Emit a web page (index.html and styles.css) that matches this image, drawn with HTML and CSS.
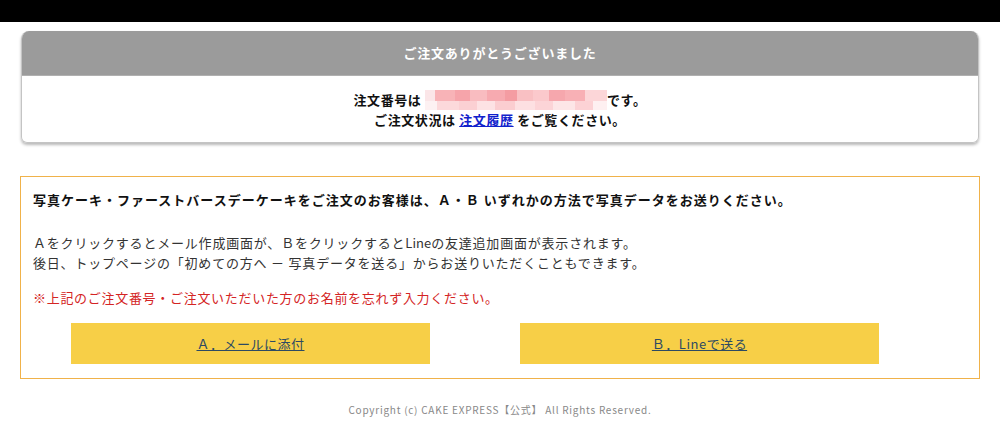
FILE: index.html
```html
<!DOCTYPE html>
<html lang="ja">

<head>
    <meta charset="UTF-8">
    <meta name="viewport" content="width=device-width, initial-scale=1.0">
    <title>ご注文完了 | CAKE EXPRESS</title>
    <link rel="stylesheet" href="styles.css">
</head>

<body>
    <div class="topbar"></div>

    <div class="thanks">
        <div class="thanks-head">ご注文ありがとうございました</div>
        <div class="thanks-body">
            <p>注文番号は <span class="order-no"></span>です。</p>
            <p>ご注文状況は <a href="#">注文履歴</a> をご覧ください。</p>
        </div>
    </div>

    <div class="guide">
        <p class="guide-lead">写真ケーキ・ファーストバースデーケーキをご注文のお客様は、Ａ・Ｂ いずれかの方法で写真データをお送りください。</p>
        <p class="guide-text">Ａをクリックするとメール作成画面が、Ｂをクリックすると<span class="latin">Line</span>の友達追加画面が表示されます。<br>後日、トップページの「初めての方へ － 写真データを送る」からお送りいただくこともできます。</p>
        <p class="guide-note">※上記のご注文番号・ご注文いただいた方のお名前を忘れず入力ください。</p>
        <div class="guide-btns">
            <a class="btn" href="#">Ａ．メールに添付</a>
            <a class="btn" href="#">Ｂ．Lineで送る</a>
        </div>
    </div>

    <footer class="copyright">Copyright (c) CAKE EXPRESS【公式】 All Rights Reserved.</footer>
</body>

</html>
```

FILE: styles.css
```css
body {
    margin: 0;
    background-color: #fff;
    color: #222;
    font-family: "Noto Sans CJK JP", "Noto Sans", sans-serif;
    font-size: 13px;
}

p {
    margin: 0;
}

.topbar {
    height: 22px;
    background-color: #000;
}

/* thank-you card */
.thanks {
    margin: 9px 21px 0;
    border: 1px solid #c4c4c4;
    border-top: none;
    border-radius: 8px 8px 6px 6px;
    box-shadow: 0 2px 3px rgba(0, 0, 0, 0.28);
    overflow: hidden;
}

.thanks-head {
    height: 44px;
    line-height: 44px;
    background-color: #9b9b9b;
    border-bottom: 1px solid #b0b0b0;
    color: #fff;
    font-weight: bold;
    font-size: 13px;
    letter-spacing: 0.8px;
    text-align: center;
}

.thanks-body {
    padding: 14px 0 12px;
    text-align: center;
    font-weight: bold;
    line-height: 20px;
    letter-spacing: 0.6px;
    color: #111;
}

.thanks-body a {
    color: #1122cc;
}

/* order number is blurred out */
.order-no {
    display: inline-block;
    width: 182px;
    height: 20px;
    vertical-align: -5px;
    background-image:
        linear-gradient(to right, #fbe6e8 0 10px, #f8b3b7 10px 30px, #f6a4aa 30px 45px, #f9bcc0 45px 62px, #f7aab0 62px 80px, #f49ca2 80px 92px, #f9c0c3 92px 108px, #fbc9cc 108px 124px, #f6a7ad 124px 140px, #f8b0b5 140px 160px, #fcd6d8 160px 182px),
        linear-gradient(to right, #fdf1f2 0 12px, #fcd9db 12px 34px, #fbd0d3 34px 52px, #fde2e4 52px 70px, #fbcdd0 70px 90px, #fde0e2 90px 110px, #fcd4d7 110px 128px, #fde6e7 128px 150px, #fcd2d5 150px 168px, #fef0f1 168px 182px);
    background-size: 182px 11px, 182px 9px;
    background-position: 0 0, 0 11px;
    background-repeat: no-repeat;
}

/* photo data guide */
.guide {
    margin: 33px 20px 0;
    padding: 13px 12px 14px;
    border: 1px solid #f0b24a;
    line-height: 20px;
    letter-spacing: 0.8px;
    color: #333;
}

.guide-lead {
    font-weight: bold;
    letter-spacing: 1px;
    color: #111;
}

.guide-text {
    margin-top: 23px;
}

.guide-text .latin {
    letter-spacing: 0;
}

.guide-note {
    margin-top: 15px;
    letter-spacing: 0.7px;
    color: #d42424;
}

.guide-btns {
    display: flex;
    gap: 90px;
    margin-top: 15px;
    padding-left: 38px;
}

.btn {
    width: 359px;
    height: 41px;
    line-height: 41px;
    background-color: #f7cf47;
    color: #2c4a63;
    font-size: 13px;
    letter-spacing: 0.5px;
    text-align: center;
}

.copyright {
    margin-top: 23px;
    text-align: center;
    font-size: 10px;
    color: #888;
    letter-spacing: 0.75px;
}
```
